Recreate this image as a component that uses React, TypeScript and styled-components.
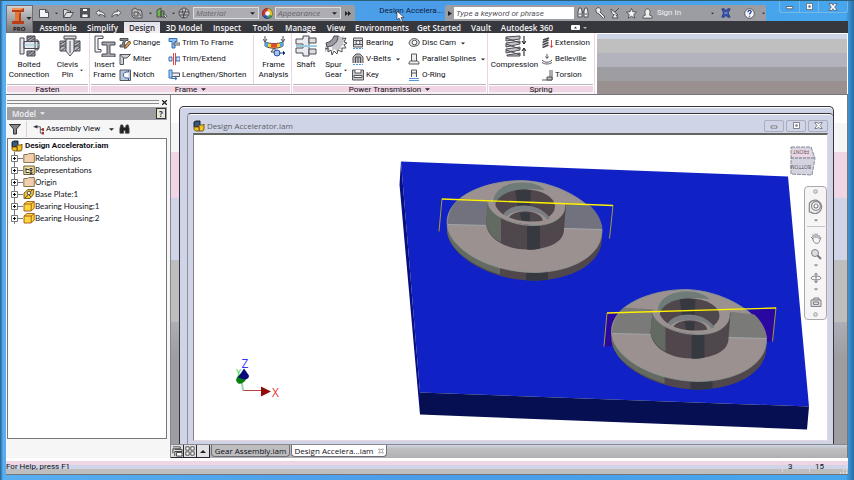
import React from "react";
import styled, { createGlobalStyle, css } from "styled-components";

const Global = createGlobalStyle`
  *, *::before, *::after { box-sizing: border-box; }
  html, body, #root { height: 100%; }
  body { margin: 0; overflow: hidden; font: 8px/10px Roboto, "Open Sans", sans-serif; color: #101016; }
  button, input { font: inherit; color: inherit; margin: 0; padding: 0; border: 0; background: none; }
  a { color: inherit; text-decoration: none; }
  svg { display: block; flex: none; }
`;

/* ---------- window frame ---------- */
const Window = styled.div`
  height: 100vh;
  display: flex;
  flex-direction: column;
  padding: 0 6px 5px;
  border-top: 1px solid #2c6077;
  background: linear-gradient(90deg, #245f8c 0, #58aef0 3px, #4a9ce8 50%, #46a6ee 99%, #2b6da5 100%);
`;
const Header = styled.header`
  display: grid;
  grid-template-columns: 27px 1fr;
  grid-template-rows: 20px 12px;
`;
const Logo = styled.button`
  grid-row: 1 / 3;
  margin-top: 4px;
  display: flex;
  align-items: center;
  justify-content: center;
  border: 1px solid #6e6e72;
  background: linear-gradient(#d0d0d2, #77777b);
`;
const TitleBar = styled.div`
  display: flex;
  align-items: flex-end;
  min-width: 0;
`;
const Strip = styled.div<{ $w: number }>`
  width: ${(p) => p.$w}px;
  height: 16px;
  flex: none;
  display: flex;
  align-items: center;
  background: #9c9ca3;
  border-radius: 2px 2px 0 0;
`;
const IconButton = styled.button<{ $w: number; $light?: boolean }>`
  width: ${(p) => p.$w}px;
  height: 14px;
  flex: none;
  display: flex;
  align-items: center;
  justify-content: center;
  ${(p) => p.$light && css`color: #f0f0f4;`}
`;
const Combo = styled.button<{ $w: number }>`
  width: ${(p) => p.$w}px;
  height: 12px;
  padding: 0 3px 0 2px;
  display: flex;
  align-items: center;
  justify-content: space-between;
  border: 1px solid #dedee2;
  background: #adadb3;
  color: #66666d;
  font-family: "Open Sans", sans-serif;
  font-style: italic;
`;
const Caption = styled.h1`
  position: relative;
  flex: 1;
  margin: 0;
  height: 16px;
  min-width: 0;
  padding-right: 2px;
  text-align: right;
  font: 8px/12px Roboto, sans-serif;
  white-space: nowrap;
  color: #0d1b3a;
`;
const Pointer = styled.svg`
  position: absolute;
  right: 40px;
  top: 5px;
`;
const Search = styled.input`
  width: 120px;
  height: 12px;
  flex: none;
  padding: 0 2px;
  background: #fff;
  font-style: italic;
  &::placeholder { color: #55555c; opacity: 1; }
`;
const WindowButtons = styled.div`
  align-self: flex-start;
  margin-left: 13px;
  height: 12px;
  flex: none;
  display: flex;
  border: 1px solid #78b9e4;
  border-top: 0;
  border-radius: 0 0 3px 3px;
  button { height: 11px; }
  button + button { border-left: 1px solid #78b9e4; }
`;
const Tabs = styled.nav`
  display: flex;
  background: #37373e;
  padding-left: 2px;
`;
const Tab = styled.button<{ $w: number; $on?: boolean }>`
  width: ${(p) => p.$w}px;
  flex: none;
  white-space: nowrap;
  line-height: 11px;
  font-family: "Open Sans", sans-serif;
  font-weight: 600;
  color: ${(p) => (p.$on ? "#303038" : "#f4f4f6")};
  ${(p) => p.$on && css`background: linear-gradient(#dfe2ec, #f5edf2); margin-top: 1px;`}
`;

/* ---------- ribbon ---------- */
const Ribbon = styled.section`
  display: flex;
  height: 62px;
  flex: none;
  border-bottom: 1px solid #77777b;
  background: #fff;
`;
const Panel = styled.div<{ $w: number }>`
  width: ${(p) => p.$w}px;
  flex: none;
  display: flex;
  flex-direction: column;
  border-right: 1px solid #ecd4e2;
`;
const PanelBody = styled.div`
  flex: 1;
  display: flex;
  padding-top: 2px;
`;
const PanelName = styled.div`
  height: 10px;
  margin: 0 1px;
  display: flex;
  align-items: center;
  justify-content: center;
  gap: 4px;
  border-top: 1px solid #bcb6bc;
  background: linear-gradient(#fff 1px, #f0d5e4 1px, #f0d5e4 7px, #f5f1f4 7px);
`;
const BigButton = styled.button<{ $w: number }>`
  width: ${(p) => p.$w}px;
  flex: none;
  display: flex;
  flex-direction: column;
  align-items: center;
  justify-content: flex-start;
  gap: 3px;
  white-space: pre-line;
  line-height: 10px;
`;
const BigLabel = styled.span`
  display: flex;
  align-items: center;
  gap: 2px;
`;
const Column = styled.div<{ $w: number }>`
  width: ${(p) => p.$w}px;
  flex: none;
  display: flex;
  flex-direction: column;
`;
const SmallButton = styled.button`
  height: 16px;
  display: flex;
  align-items: center;
  gap: 2px;
  white-space: nowrap;
`;
const More = styled.span`
  padding-left: 3px;
`;
const Rule = styled.div`
  width: 1px;
  margin-right: 4px;
  background: #e6d5df;
`;
const RibbonRest = styled.div`
  flex: 1;
  margin: 1px 1px 0 2px;
  background: linear-gradient(
    #cdd4e6 5px, #bfbfbf 5px, #bfbfbf 19px, #b2b3bd 19px, #b2b3bd 33px, #9d9da2 33px, #9d9da2 47px, #9a908f 47px
  );
`;

/* ---------- work area ---------- */
const Work = styled.main`
  flex: 1;
  min-height: 0;
  display: flex;
  background: #f4f4f5;
`;
const Browser = styled.aside`
  width: 165px;
  flex: none;
  display: flex;
  flex-direction: column;
  padding: 2px 3px 19px 1px;
  border-right: 1px solid #88888c;
  background: #f6f6f7;
`;
const Grip = styled.div`
  height: 10px;
  display: flex;
  align-items: center;
  gap: 3px;
  &::before { content: ""; flex: 1; height: 4px; border: solid #8a8a8e; border-width: 1px 0; }
`;
const BrowserTitle = styled.div`
  height: 13px;
  padding: 0 1px 0 5px;
  display: flex;
  align-items: center;
  gap: 4px;
  background: #9d9da2;
  color: #f1f1f4;
  font-family: "Open Sans", sans-serif;
  font-weight: 600;
`;
const HelpBox = styled.button`
  margin-left: auto;
  width: 10px;
  height: 11px;
  border: 1px solid #33333a;
  background: #e8e9d5;
  color: #25256b;
  font-weight: 700;
  line-height: 9px;
`;
const BrowserTools = styled.div`
  height: 18px;
  flex: none;
  display: flex;
  align-items: center;
  padding-left: 2px;
`;
const ViewButton = styled.button`
  height: 16px;
  margin: 0 5px 0 5px;
  padding-left: 6px;
  display: flex;
  align-items: center;
  gap: 2px;
  border-left: 1px solid #e1cdda;
`;
const ViewName = styled.span`
  width: 61px;
  text-align: left;
`;
const Tree = styled.ul`
  flex: 1;
  margin: 0;
  padding: 1px 0 0 3px;
  list-style: none;
  background: #fff;
  border: 1px solid #77777b;
`;
const Node = styled.li<{ $root?: boolean }>`
  height: 12px;
  display: flex;
  align-items: center;
  gap: ${(p) => (p.$root ? 2 : 0)}px;
  white-space: nowrap;
  font-family: ${(p) => (p.$root ? "Roboto" : "Lato")}, sans-serif;
  font-weight: ${(p) => (p.$root ? 700 : 400)};
`;
const Desk = styled.section`
  flex: 1;
  min-width: 0;
  display: flex;
  flex-direction: column;
  border-right: 1px solid #77777b;
`;
const Mdi = styled.div`
  flex: 1;
  min-height: 0;
  display: flex;
  padding: 11px 13px 0 8px;
  background: linear-gradient(
    #fff 28px, #f6f6f7 28px, #f6f6f7 57px, #f0d5e4 57px, #f0d5e4 103px, #cfd5e7 103px,
    #cfd5e7 165px, #bebebf 165px, #bebebf 227px, #adaeb6 227px, #9d9da2 262px
  );
`;
const BackWindow = styled.div`
  flex: 1;
  min-width: 0;
  display: flex;
  padding: 6px 0 0 7px;
  border: 1px solid #34343c;
  border-bottom: 0;
  border-radius: 5px 5px 0 0;
  background: #cfd5e7;
  box-shadow: inset 0 1px #fff;
`;
const DocWindow = styled.article`
  flex: 1;
  min-width: 0;
  display: flex;
  flex-direction: column;
  padding: 0 5px 3px;
  border: solid #34343c;
  border-width: 1px 0 0 1px;
  border-left-color: #8e8e98;
  border-radius: 4px 4px 0 0;
  background: #cfd5e7;
  box-shadow: inset 0 1px #fff;
`;
const DocTitle = styled.div`
  height: 19px;
  padding-top: 4px;
  flex: none;
  display: flex;
  align-items: center;
  gap: 2px;
  font-family: "Open Sans", sans-serif;
  color: #5b5e68;
`;
const DocButtons = styled.div`
  margin-left: auto;
  display: flex;
  gap: 2px;
  button { border: 1px solid #aaaebc; border-radius: 2px; height: 12px; }
`;
const Canvas = styled.div`
  position: relative;
  flex: 1;
  min-height: 0;
  border: 1px solid #e8d5e2;
  border-top: 2px solid #63665f;
  border-left-color: #83838b;
  background: #fff;
`;
const Cube = styled.button`
  position: absolute;
  right: 11px;
  top: 11px;
`;
const NavBar = styled.div`
  position: absolute;
  right: 0;
  top: 51px;
  width: 23px;
  height: 134px;
  padding: 2px 0;
  display: flex;
  flex-direction: column;
  align-items: center;
  justify-content: space-between;
  border: 1px solid #a9a9ac;
  border-radius: 4px;
  background: #f5f5f6;
  hr { width: 18px; margin: 0; border: 0; border-top: 1px solid #c4c4c6; }
`;
const DocTabs = styled.div`
  height: 14px;
  flex: none;
  display: flex;
  background: linear-gradient(#cfd5e7, #bebebf 4px, #b0b0b4);
  border-top: 1px solid #8a8a8e;
`;
const TabTool = styled.button`
  width: 13px;
  display: flex;
  align-items: center;
  justify-content: center;
  border: solid #26262c;
  border-width: 0 1px 1px 0;
  background: #e2e2e6;
`;
const DocTab = styled.button<{ $w: number; $on?: boolean }>`
  width: ${(p) => p.$w}px;
  height: 12px;
  margin-left: 1px;
  display: flex;
  align-items: center;
  justify-content: center;
  gap: 4px;
  white-space: nowrap;
  border: 1px solid #6e6e74;
  border-top: 0;
  border-radius: 0 0 4px 4px;
  font-family: "Open Sans", sans-serif;
  background: ${(p) => (p.$on ? "#fff" : "#bdbdc0")};
`;
const Status = styled.footer`
  height: 17px;
  padding-top: 1px;
  flex: none;
  display: flex;
  align-items: center;
  border-bottom: 1px solid #76767a;
  background: linear-gradient(
    #fff 3px, #f0d5e4 3px, #f0d5e4 7px, #cfd5e7 7px, #cfd5e7 11px, #bebebf 11px
  );
`;
const Cell = styled.span<{ $w: number }>`
  width: ${(p) => p.$w}px;
  padding-left: 5px;
  border-left: 1px solid #e2d0de;
`;
const Sizer = styled.svg`
  align-self: flex-end;
`;
const Fill = styled.span`
  flex: 1;
`;

/* ---------- icons ---------- */
const Arrow = ({ c = "#222228", s = 5 }: { c?: string; s?: number }) => (
  <svg width={s} height="3" viewBox="0 0 6 3"><path d="M0 0h6L3 3z" fill={c} /></svg>
);

const glyphs: Record<string, React.ReactNode> = {
  new: <path d="M1.500 2.500h6l3 2.500v5.500h-9zM7.500 2.500v3h3" fill="#f4f4f6" />,
  open: <path d="M1.500 10.500v-8h3l1 1.500h3v2M1.500 10.500l3-5h7l-3 5z" fill="#ddd" />,
  save: <><path d="M1.500 1.500h9v9h-9z" fill="#555" /><path d="M3.500 1.500h5v3h-5zM3 7h6v3.500H3z" fill="#fff" /></>,
  undo: <path d="M1 5l4-3v2c4 0 6 2 6 6-1-2-3-3-6-3v2z" fill="#eee" />,
  redo: <path d="M11 5L7 2v2c-4 0-6 2-6 6 1-2 3-3 6-3v2z" fill="#eee" />,
  part: <><path d="M1 3l3-2 3 2h3l1 3v5H3L1 9z" fill="#bbb" /><path d="M3 5h4v4H3zM7 5l3 4" fill="none" /></>,
  update: <><path d="M1 3l4-2v9H1zM5 4h3v6H5z" fill="#70b450" /><path d="M7 6l4 3-2 2z" fill="#eee" /></>,
  globe: <><circle cx="6" cy="6" r="5" fill="#bbb" /><path d="M1 5h10M2 8h8M4 2l2 9M8 2L5 11" fill="none" /></>,
  wheel: <><g stroke="none"><path d="M6 6V0A6 6 0 0 1 11.200 9z" fill="#e8c22b" /><path d="M6 6V0A6 6 0 0 0 .8 9z" fill="#d92e3a" /><path d="M6 6l5.200 3A6 6 0 0 1 6 12z" fill="#3da64a" /><path d="M6 6L.8 9A6 6 0 0 0 6 12z" fill="#2855be" /><circle cx="6" cy="6" r="2.500" fill="#fff" /></g><circle cx="6" cy="6" r="5.500" fill="none" stroke="#333" strokeWidth=".6" /></>,
  binoc: <><path d="M1 5l1-4h2l1 3v6H1zM11 5l-1-4H8L7 4v6h4z" fill="#eee" /><path d="M5 5h2M1.500 7h3M7.500 7h3" /></>,
  binocDark: <path d="M1 5l1-4h2l1 3h2l1-3h2l1 4v5H7V7H5v3H1z" fill="#222" />,
  key: <path d="M2 4a2.500 2.500 0 1 1 4 1l5 5-1.500 1.500-5-5A2.500 2.500 0 0 1 2 4z" fill="#eee" />,
  dish: <><path d="M2 2c0 5 3 7 7 6zM6 5l4-4" fill="#eee" /><path d="M5 8l-2 3h6L7 8" fill="#eee" /></>,
  star: <path d="M6 .5l1.500 3.500 4 .5-3 2.500 1 4L6 9l-3.500 2 1-4-3-2.500 4-.5z" fill="#f2f2f2" />,
  user: <path d="M1 11V9l3-1.500C3 6 2.500 1 6 1s3 5 2 6.500L11 9v2z" fill="#eee" />,
  exchange: <><path d="M1 1h3l2 2.500L8 1h3L8.500 6l2.500 5H8L6 8.500 4 11H1l2-5z" fill="#3554ae" stroke="#20347d" /><path d="M4 6h4" stroke="#b9c8f0" /></>,
  help: <><circle cx="6" cy="6" r="5.200" fill="#f4f6fc" /><path d="M4.300 4.500c0-2.500 3.500-2.500 3.500-.3C7.800 5.500 6 5.500 6 7.200M6 8.500v1" fill="none" stroke="#203c98" strokeWidth="1.400" /></>,
  change: <><path d="M1 1.500h8v2H6.500L5 8h2v2H1V8h2l1.500-4.500H1z" fill="#888" /><path d="M6 9l4-5 2 1.500-4 5-2.500 1z" fill="#e9a23a" /></>,
  miter: <path d="M1 1.500h10.500L8 5H4.500v6.500H1zM1 1.500L4.500 5" fill="#cfd2da" />,
  notch: <><path d="M1 1h10.500v10.500H1z" fill="#b9c8df" /><path d="M9.500 3c-7-1-7 7 0 6v2M9.500 3V1.500" fill="#fff" stroke="#234d86" /></>,
  trim: <><path d="M1 1.500h8v3H7V11H4V4.500H1z" fill="#8dbdf0" stroke="#2369b3" /><path d="M6 6h6v2H6z" fill="#eee" /></>,
  extend: <><path d="M1 4h3v4H1zM8 4h4v4H8z" fill="#cfe2fb" stroke="#265ca4" /><path d="M5.500 0v12M7.500 0v12" stroke="#d8322e" /></>,
  lengthen: <><path d="M3 4h8.500v3.500H3z" fill="#eee" /><path d="M1 1v8h3V1zM3 9.500h6M7 8l2 1.500L7 11" fill="#a9cdf6" stroke="#2369b3" /></>,
  bearing: <><path d="M1.500 1h9v9h-9zM1.500 3.500h9M1.500 7.500h9" fill="#ddd" /><circle cx="6" cy="5.500" r="2" fill="#fff" /><path d="M1 11.500h10" stroke="#3f87dc" strokeDasharray="2 1" /></>,
  vbelt: <><path d="M1 10V4l3-3h4l3 3v6M3.500 10V4h5v6M6 4v6" fill="#bbb" /><path d="M1 11.500h10" stroke="#3f87dc" strokeDasharray="2 1" /></>,
  keyway: <><path d="M.5 1h11v10H.5z" fill="#ccc" /><path d="M3 1v3h6V1M2 6.500h8v2H2z" fill="#fff" /></>,
  cam: <><path d="M1 6c1-5 7-6 10-2 1 3-1 5-4 5-3 1-5 0-6-3z" fill="#ddd" /><circle cx="6.500" cy="5.500" r="2.300" fill="#fff" /></>,
  spline: <path d="M3.500 8V1h5v7M1 11c0-3 1-3 2.500-3h5C10 8 11 8 11 11z" fill="#eee" />,
  oring: <><path d="M3.500 8V1h5v7M3.500 4h5" fill="#eee" /><path d="M1 9.500h10M1 11.500h10" stroke="#3f87dc" /></>,
  extension: <><path d="M2 3l6-2M1.500 5.500l6-2.500M1.500 8l6-2.500M1.500 10.500l6-2.500" strokeWidth="1.600" fill="none" /><path d="M10.500 3v7M9 8.500l1.500 2L12 8.500" stroke="#d8322e" fill="none" /></>,
  belleville: <path d="M6 1v4M4.500 3.500L6 5.500l1.500-2M1 7c3 3 7 3 10 0M1 9.500c3 2 7 2 10 0" fill="none" />,
  torsion: <><path d="M9 1v8M11 1v10H1" fill="none" /><path d="M6 8h5v3H6z" fill="#bbb" /></>,
  assembly: <><path d="M1 2l2-1h4v5l-2 1H1z" fill="#345a83" stroke="#111" /><path d="M6 5h4l1-1v5l-1 2H6z" fill="#f0c326" stroke="#704d10" /><path d="M1 7h5v4H3L1 9.500z" fill="#f0c326" stroke="#704d10" /></>,
  folder: <path d="M.8 10.500V2.500h4l1-1h5.500v9z" fill="#efcfae" stroke="#7d6a44" />,
  reps: <><path d="M.8 10.500V2h10.500v8.500z" fill="#f1dc9e" stroke="#5e5230" /><path d="M3 4v4.500h3M3 5.500h3M7 4.500h2v2H7zM7 8h2v1.500H7z" fill="#fff" stroke="#222" /></>,
  plate: <><path d="M1 5l4-3.500h6L10 7l-3 3.500H1z" fill="#f1c734" stroke="#764f18" /><path d="M2 10L10 1M5 6l3 3" stroke="#444" /><circle cx="6" cy="5" r="1.800" fill="#eee" /></>,
  box: <path d="M1 4l3-2.500h7.200V8l-3 3H1zM1 4h7.200v7M8.200 4l3-2.500" fill="#f8d83a" stroke="#a5521c" />,
  filter: <path d="M.5 1.500h11L7.500 6v5h-3V6z" fill="#888" stroke="#222" />,
  views: <><path d="M0 3l5-2v4z" fill="#333" stroke="none" /><path d="M5 3h3v3h3M8 6v4h3" fill="none" /><path d="M10 5h2v2h-2zM10 9h2v2h-2z" fill="#a43230" stroke="#a43230" /></>,
  cascade: <path d="M1 1h8v2H1v5M3 4h8v2H3v5M5 7h6v4H5z" fill="#fff" stroke="#222" />,
  tiles: <path d="M1 1h4v4H1zM7 1h4v4H7zM1 7h4v4H1zM7 7h4v4H7z" fill="#fff" stroke="#222" />,
  min: <path d="M2.500 6h7v2.500h-7z" fill="#fff" stroke="#55555f" />,
  max: <path d="M2 2h8v8H2zM5 5h2v2H5z" fill="#fff" fillRule="evenodd" stroke="#55555f" />,
  close: <path d="M1 2h3.500L6 4l1.500-2H11L8 6l3 4H7.500L6 8l-1.500 2H1l3-4z" fill="#fff" stroke="#55555f" />,
  steer: <><path d="M1 4a5 5 0 1 1 1 6.500H1z" fill="#eee" /><circle cx="6" cy="6" r="3.300" fill="#fff" /><circle cx="6" cy="6" r="1.500" fill="none" /></>,
  hand: <path d="M3 7L1 5M3 8V2.500M5 6V1.500M7 6V1.500M9 7V3M3 8c1 4 6 5 7 0l1-3" fill="none" />,
  mag: <><circle cx="5" cy="5" r="3.500" fill="#ddd" /><path d="M7.500 7.500l3.500 3.500" strokeWidth="2" /></>,
  orbit: <><ellipse cx="6" cy="6" rx="5" ry="2" fill="none" /><path d="M6 1v9M4.500 2.500L6 1l1.500 1.500M4.500 9L6 11l1.500-2" fill="none" /></>,
  look: <path d="M1 4h10v6.500H1zM3 4l1-2h5v2M3.500 6h5v2.500h-5z" fill="#ddd" />,
  dot: <circle cx="6" cy="6" r="4.500" fill="#ddd" strokeWidth="2" />,
};
const Icon = ({ n, s = 12, c = "#45454d" }: { n: string; s?: number; c?: string }) => (
  <svg width={s} height={s} viewBox="0 0 12 12" stroke={c} strokeWidth=".9" aria-hidden="true">{glyphs[n]}</svg>
);

const bigGlyphs: Record<string, React.ReactNode> = {
  bolt: <><path d="M9 1h8v6H9zM9 16h8v5H9z" fill="#9b9ba3" /><path d="M2 3h4v16H2zM6 6.500h15v7H6zM17 5h3v10h-3z" fill="#e4e6ec" /><path d="M9 3l4-2M9 6l7-5M12 7l5-4M9 20l5-4M12 21l5-4" /><path d="M6 10h15" stroke="#9ccce0" /></>,
  clevis: <><path d="M1 6h20v10H1z" fill="#b8b8be" /><path d="M5 1h12v3H5z" fill="#ddd" /><path d="M7 4h8v12l-4 5-4-5z" fill="#e8e8ec" /><path d="M1 9l6-3M1 13l6-5M2 16l5-4M15 9l6-3M15 13l6-5M16 16l5-4M1 11h6M15 11h6M11 6v12" /></>,
  insert: <><path d="M9 1H1v16h6v-2.500H4v-11h5z" fill="#f4f4f6" /><path d="M8 7h13v3h-5v9h5v3H8v-3h5v-9H8z" fill="#a9a9b0" /></>,
  analysis: <><path d="M2 1v5M20 1v5M0 4l2 3 2-3M18 4l2 3 2-3" fill="none" /><path d="M2 7c5 2 13 2 18 0v4c-5 3-13 3-18 0z" fill="#f1d336" /><path d="M2 7l3 1v4l-3-1zM20 7l-3 1v4l3-1z" fill="#4ba5e6" stroke="none" /><path d="M8 8.500h6v4H8z" fill="#e34930" stroke="none" /><path d="M11 13l-3 4h6z" fill="#ddd" /><circle cx="14" cy="18" r="3" fill="#9fc3f4" stroke="#244c94" /><path d="M16 18h6M20 16l2 2-2 2" stroke="#244c94" /></>,
  shaft: <><path d="M1 4h7V1h6v20H8v-3H1v-5h7V9H1z" fill="#e9ebf0" /><path d="M14 3h7v5h-7zM14 14h7v5h-7z" fill="#ddd" /><path d="M1 11h21" stroke="#9ccce0" strokeWidth="2" /></>,
  gear: <><path d="M9 1l3 1 2-2 2 2 3-1-1 3 3 2-3 1 1 3-3 1 1 3-3 0-2 3-2-3-3 2 0-4-3 0 1 4-3-1-2 3-1-4 4-6z" fill="#c5c5ca" stroke="none" /><path d="M0 14l3-1 0 4 3-2 1 5 2-4 3 3 1-4 4 2 0-4 4 0-2-3 3-2-3-1 2-4-4 1" fill="none" /><path d="M1 8c4-1 7-3 8-7l4 0c0 6-4 10-11 11z" fill="#9a9aa2" /></>,
  spring: <><path d="M2 2l14-1v3L2 6zM2 8l14-2v3L2 12zM2 14l14-2v3L2 18zM3 20l13-2v3H3z" fill="#c3c3c8" /><path d="M2 3l14 5M2 9l14 5M2 15l14 5" /><path d="M20 1v7M18 6l2 3 2-3M20 21v-7M18 16l2-3 2 3" fill="none" stroke="#111" /></>,
};
const BigIcon = ({ n }: { n: string }) => (
  <svg width="22" height="22" viewBox="0 0 22 22" stroke="#4b4b54" strokeWidth="1" aria-hidden="true">{bigGlyphs[n]}</svg>
);

const Big = ({ icon, text, w, more }: { icon: string; text: string; w: number; more?: boolean }) => (
  <BigButton $w={w}><BigIcon n={icon} /><BigLabel>{text}{more && <Arrow s={3} />}</BigLabel></BigButton>
);
const Small = ({ icon, text, more }: { icon: string; text: string; more?: boolean }) => (
  <SmallButton><Icon n={icon} />{text}{more && <More><Arrow s={4} /></More>}</SmallButton>
);

const Expander = () => (
  <svg width="12" height="12" viewBox="0 0 12 12" fill="none" stroke="#77777d">
    <path d="M3.500 0v12M7 6.500h5" /><path d="M.5 3.500h6v6h-6z" fill="#fff" /><path d="M2 6.500h3M3.500 5v3" stroke="#111" />
  </svg>
);

/* ---------- 3D model ---------- */
const Housing = ({ wedge }: { wedge: string }) => (
  <g>
    <path d="M447 222v9c3 26 45 49 86 49 40 0 69-18 69-42v-8z" fill="#50474c" />
    <path d="M447 222v9c2 18 24 34 53 43v-9z" fill="#626a61" />
    <path d="M526 270h22v9q-11 2-22 1z" fill="#373941" />
    <path d="M447 222C447 195 487 180 522 180C562 181 602 208 602 230C602 256 570 272 533 272C485 271 447 246 447 222Z" fill="#9b9191" stroke="#8d9690" strokeWidth=".8" />
    <path d="M447.500 224C448 213 452 205 459 198L490 200 487 225Z" fill={wedge} />
    <path d="M563 202L590 205C598 213 602 221 602 229L564 228Z" fill={wedge} />
    <path d="M448 224l40 1M564 228l38 1" stroke="#a4a6aa" />
    <path d="M488 203l-2 20c1 14 18 26 41 26 23 0 37-8 37-20l2-25z" fill="#50474c" />
    <path d="M488 203l-2 20c1 7 6 14 15 19V218z" fill="#626a61" />
    <path d="M527 221h13v27q-7 2-13 1z" fill="#373941" />
    <path d="M493 203C493 190 506 182 523 181C546 182 565 194 565 205C565 219 549 226 530 225C508 224 488 213 488 201Z" fill="#9b9191" stroke="#91a097" strokeWidth=".6" />
    <path d="M493 202C494 187 510 181 524 182C533 182 541 185 545 190C525 186 504 190 497 202Z" fill="#6e7b78" />
    <ellipse cx="525" cy="206" rx="30" ry="17" fill="#50474c" />
    <path d="M515 190q10-2 16 0l-1 17h-12z" fill="#373941" />
    <path d="M502 217c4-15 37-17 48 1q-11 6-25 5-14 0-23-6z" fill="#7a7e83" />
    <path d="M505 218c5-10 34-11 42 1q-10 4-22 3-12 0-20-4z" fill="#9b9191" />
    <path d="M508 219c4-11 31-11 35 1q-8 4-17 4-10-1-18-5z" fill="#50474c" />
    <path d="M520 212h10v10h-8z" fill="#373941" />
    <path d="M490 201c1 13 18 22 38 23 20 0 34-7 36-17-4 9-18 15-34 14-18 0-31-7-35-17z" fill="#9b9191" />
  </g>
);
const Scene = () => (
  <svg width="100%" height="100%" viewBox="194 135 633 304" preserveAspectRatio="xMaxYMid meet">
    <path d="M401 161L788 176L809 406L420 392Z" fill="#1021c5" />
    <path d="M401 161L399.500 184L420 414V392Z" fill="#080f80" />
    <path d="M420 392L809 406L807 429L420 414Z" fill="#050f52" />
    <Housing wedge="#71727d" />
    <path d="M439 231L442 198M613 205L609.500 238" stroke="#a59a3c" fill="none" />
    <path d="M442 198.500L613 205" stroke="#fff200" strokeWidth="1.400" />
    <path d="M607 312.500L604 346L622 345V312ZM750 308L776 307L772.500 341L750 341Z" fill="#2907a0" />
    <g transform="translate(164.500 109)"><Housing wedge="#7a7a78" /></g>
    <path d="M604 346L607 312.500M776 307L772.500 341" stroke="#a59a3c" />
    <path d="M607 312.500L776 307.500" stroke="#fff200" strokeWidth="1.400" />
    <path d="M243 390h19" stroke="#c04040" /><path d="M261 386l10 5-10 5z" fill="#930c0c" />
    <path d="M243 390l-2-14" stroke="#9bd6ae" strokeWidth="2" />
    <path d="M236 380q1-6 6-7l4 6q-3 5-8 4z" fill="#078014" />
    <path d="M238 377l6-9 5 7q0 4-5 4z" fill="#0a0a78" />
    <g fontFamily="Open Sans, sans-serif" fontSize="12">
      <text x="236" y="375" fill="#22d43e" fontSize="9">Y</text>
      <text x="241.500" y="367" fill="#3535ef">Z</text>
      <text x="272" y="396" fill="#e63a3a">X</text>
    </g>
  </svg>
);

const tabs: [string, number][] = [
  ["Assemble", 46], ["Simplify", 43], ["Design", 36], ["3D Model", 48], ["Inspect", 38], ["Tools", 34],
  ["Manage", 41], ["View", 30], ["Environments", 62], ["Get Started", 52], ["Vault", 32], ["Autodesk 360", 60],
];
const nodes: [string, string][] = [
  ["folder", "Relationships"], ["reps", "Representations"], ["folder", "Origin"],
  ["plate", "Base Plate:1"], ["box", "Bearing Housing:1"], ["box", "Bearing Housing:2"],
];

export default function App() {
  return (
    <>
      <Global />
      <Window>
        <Header>
          <Logo aria-label="Application menu">
            <svg width="25" height="26" viewBox="0 0 25 26">
              <path d="M5 2h12v4h-3v9h3v3H5v-3h3V6H5z" fill="#b83e17" /><path d="M8 6h6l-2 2v7H8z" fill="#e47635" />
              <path d="M5 2h12l-3 2H5z" fill="#ef955a" /><path d="M19.500 11h5l-2.500 3z" fill="#26262c" />
              <text x="6" y="25" fontSize="6" fontWeight="700" fontFamily="Open Sans, sans-serif" fill="#27120c">PRO</text>
            </svg>
          </Logo>
          <TitleBar>
            <Strip $w={322}>
              <IconButton $w={22} aria-label="New"><Icon n="new" /></IconButton><Arrow s={3} />
              <IconButton $w={20} aria-label="Open"><Icon n="open" /></IconButton>
              <IconButton $w={14} aria-label="Save"><Icon n="save" /></IconButton>
              <IconButton $w={17} aria-label="Undo"><Icon n="undo" s={11} /></IconButton>
              <IconButton $w={15} aria-label="Redo"><Icon n="redo" s={11} /></IconButton>
              <IconButton $w={25} aria-label="Select"><Icon n="part" /></IconButton><Arrow s={3} />
              <IconButton $w={20} aria-label="Update"><Icon n="update" /></IconButton><Arrow s={3} />
              <IconButton $w={18} aria-label="Web"><Icon n="globe" /></IconButton>
              <Combo $w={66}>Material<Arrow /></Combo>
              <IconButton $w={16} aria-label="Color"><Icon n="wheel" s={11} /></IconButton>
              <Combo $w={66}>Appearance<Arrow /></Combo>
              <IconButton $w={14} aria-label="More commands">
                <svg width="6" height="5" viewBox="0 0 6 5"><path d="M0 0l3 2.500L0 5zM3 0l3 2.500L3 5z" fill="#222" /></svg>
              </IconButton>
            </Strip>
            <Caption>
              Design Accelera...
              <Pointer width="9" height="13" viewBox="0 0 9 13"><path d="M1 1v9l2-2 2 4 1.500-1L5 7.500h3z" fill="#fff" stroke="#334" strokeWidth=".7" /></Pointer>
            </Caption>
            <Strip $w={321}>
              <IconButton $w={9} aria-label="Expand"><svg width="4" height="5" viewBox="0 0 4 5"><path d="M0 0l4 2.500L0 5z" fill="#222" /></svg></IconButton>
              <Search aria-label="Search help" placeholder="Type a keyword or phrase" />
              <IconButton $w={18} aria-label="Search"><Icon n="binoc" /></IconButton>
              <IconButton $w={15} aria-label="Subscription"><Icon n="key" /></IconButton>
              <IconButton $w={16} aria-label="Communication"><Icon n="dish" /></IconButton>
              <IconButton $w={16} aria-label="Favorites"><Icon n="star" s={11} /></IconButton>
              <IconButton $w={16} aria-label="Account"><Icon n="user" s={11} /></IconButton>
              <IconButton $w={28} $light>Sign In</IconButton>
              <Fill /><Arrow s={3} />
              <IconButton $w={24} aria-label="Exchange apps"><Icon n="exchange" s={10} /></IconButton>
              <IconButton $w={22} aria-label="Help"><Icon n="help" s={11} /></IconButton>
              <IconButton $w={6} aria-label="Help menu"><Arrow s={3} /></IconButton>
            </Strip>
            <WindowButtons>
              <IconButton $w={19} aria-label="Minimize"><Icon n="min" s={11} /></IconButton>
              <IconButton $w={19} aria-label="Maximize"><Icon n="max" s={9} /></IconButton>
              <IconButton $w={29} aria-label="Close"><Icon n="close" s={10} /></IconButton>
            </WindowButtons>
          </TitleBar>
          <Tabs>
            {tabs.map(([t, w]) => <Tab key={t} $w={w} $on={t === "Design"}>{t}</Tab>)}
            <IconButton $w={44} aria-label="Minimize ribbon">
              <svg width="16" height="6" viewBox="0 0 16 6"><rect width="9" height="5" rx="1" fill="#fff" /><path d="M3 3.500h3L4.500 1.500z" fill="#333" /><path d="M12 2h4l-2 2z" fill="#bbb" /></svg>
            </IconButton>
          </Tabs>
        </Header>

        <Ribbon>
          <Panel $w={84}>
            <PanelBody><Big icon="bolt" text={"Bolted\nConnection"} w={46} /><Big icon="clevis" text={"Clevis\nPin"} w={36} more /></PanelBody>
            <PanelName>Fasten</PanelName>
          </Panel>
          <Panel $w={202}>
            <PanelBody>
              <Big icon="insert" text={"Insert\nFrame"} w={29} />
              <Column $w={49}><Small icon="change" text="Change" /><Small icon="miter" text="Miter" /><Small icon="notch" text="Notch" /></Column>
              <Column $w={85}><Small icon="trim" text="Trim To Frame" /><Small icon="extend" text="Trim/Extend" /><Small icon="lengthen" text="Lengthen/Shorten" /></Column>
              <Rule />
              <Big icon="analysis" text={"Frame\nAnalysis"} w={31} />
            </PanelBody>
            <PanelName>Frame<Arrow /></PanelName>
          </Panel>
          <Panel $w={196}>
            <PanelBody>
              <Big icon="shaft" text="Shaft" w={28} /><Big icon="gear" text={"Spur\nGear"} w={32} more />
              <Column $w={56}><Small icon="bearing" text="Bearing" /><Small icon="vbelt" text="V-Belts" more /><Small icon="keyway" text="Key" /></Column>
              <Column $w={79}><Small icon="cam" text="Disc Cam" more /><Small icon="spline" text="Parallel Splines" more /><Small icon="oring" text="O-Ring" /></Column>
            </PanelBody>
            <PanelName>Power Transmission<Arrow /></PanelName>
          </Panel>
          <Panel $w={107}>
            <PanelBody>
              <Big icon="spring" text="Compression" w={53} />
              <Column $w={53}><Small icon="extension" text="Extension" /><Small icon="belleville" text="Belleville" /><Small icon="torsion" text="Torsion" /></Column>
            </PanelBody>
            <PanelName>Spring</PanelName>
          </Panel>
          <RibbonRest />
        </Ribbon>

        <Work>
          <Browser>
            <Grip><button aria-label="Close panel"><svg width="5" height="5" viewBox="0 0 5 5"><path d="M0 0l5 5M5 0L0 5" stroke="#222" strokeWidth="1.300" /></svg></button></Grip>
            <BrowserTitle>Model<Arrow c="#f1f1f4" /><HelpBox aria-label="Help">?</HelpBox></BrowserTitle>
            <BrowserTools>
              <button aria-label="Filter"><Icon n="filter" /></button>
              <ViewButton><Icon n="views" s={11} /><ViewName>Assembly View</ViewName><Arrow /></ViewButton>
              <button aria-label="Find"><Icon n="binocDark" s={11} /></button>
            </BrowserTools>
            <Tree>
              <Node $root><Icon n="assembly" />Design Accelerator.iam</Node>
              {nodes.map(([i, t]) => <Node key={t}><Expander /><Icon n={i} />{t}</Node>)}
            </Tree>
          </Browser>
          <Desk>
            <Mdi>
              <BackWindow>
                <DocWindow>
                  <DocTitle>
                    <Icon n="assembly" />Design Accelerator.iam
                    <DocButtons>
                      <IconButton $w={20} aria-label="Minimize document"><Icon n="min" s={10} /></IconButton>
                      <IconButton $w={20} aria-label="Restore document"><Icon n="max" s={9} /></IconButton>
                      <IconButton $w={20} aria-label="Close document"><Icon n="close" s={9} /></IconButton>
                    </DocButtons>
                  </DocTitle>
                  <Canvas>
                    <Scene />
                    <Cube aria-label="View cube">
                      <svg width="26" height="30" viewBox="0 0 26 30">
                        <path d="M1 1h20l4 11-3 17-21-1z" fill="#d3d4df" stroke="#8b8b96" strokeDasharray="4 1" />
                        <path d="M3 3h17l3 8H2z" fill="#edd6e3" /><path d="M1 12h24" stroke="#77777f" strokeDasharray="3 1" />
                        <g fontFamily="Open Sans, sans-serif" fontSize="5" fill="#55555e" transform="rotate(180 11.500 14)">
                          <text x="2" y="9">BOTTOM</text><text x="4" y="24">FRONT</text>
                        </g>
                      </svg>
                    </Cube>
                    <NavBar>
                      <Icon n="dot" s={5} c="#999" />
                      <Icon n="steer" s={16} c="#85858a" />
                      <Arrow c="#777" s={4} /><hr />
                      <Icon n="hand" s={12} c="#77777d" />
                      <Icon n="mag" s={12} c="#77777d" /><Arrow c="#777" s={4} />
                      <Icon n="orbit" s={12} c="#77777d" /><Arrow c="#777" s={4} />
                      <Icon n="look" s={12} c="#77777d" />
                      <Icon n="dot" s={5} c="#999" />
                    </NavBar>
                  </Canvas>
                </DocWindow>
              </BackWindow>
            </Mdi>
            <DocTabs>
              <TabTool aria-label="Cascade"><Icon n="cascade" s={11} /></TabTool>
              <TabTool aria-label="Tile"><Icon n="tiles" s={10} /></TabTool>
              <TabTool aria-label="Show tabs"><svg width="6" height="3" viewBox="0 0 6 3"><path d="M0 3h6L3 0z" fill="#222" /></svg></TabTool>
              <DocTab $w={79}>Gear Assembly.iam</DocTab>
              <DocTab $w={96} $on>Design Accelera...iam<Icon n="close" s={6} /></DocTab>
            </DocTabs>
          </Desk>
        </Work>
        <Status>
          <Fill>For Help, press F1</Fill><Cell $w={27}>3</Cell><Cell $w={26}>15</Cell>
          <Sizer width="13" height="12" viewBox="0 0 13 12"><path d="M5 11h1M8 11h1M11 11h1M8 8h1M11 8h1M11 5h1" stroke="#eee" strokeWidth="1.500" /></Sizer>
        </Status>
      </Window>
    </>
  );
}
